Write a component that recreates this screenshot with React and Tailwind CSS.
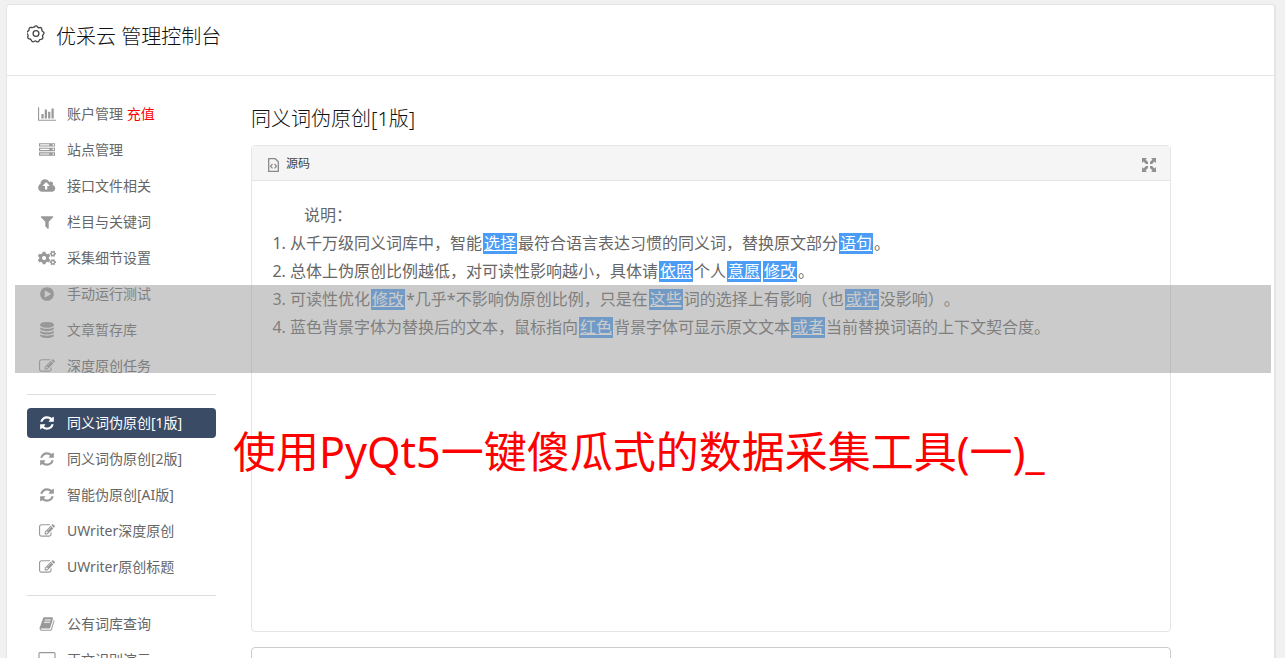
import React from 'react';
import { FaCogs } from 'react-icons/fa';

const ICONS = {
  chart: {
    viewBox: '0 0 2048 1792',
    d: 'M640 896v512h-256v-512h256zm384-512v1024h-256v-1024h256zm1024 1152v128h-2048v-1536h128v1408h1920zm-640-896v768h-256v-768h256zm384-384v1152h-256v-1152h256z',
  },
  server: {
    viewBox: '0 0 1792 1792',
    d: 'M128 1408h1024v-128h-1024v128zm0-512h1024v-128h-1024v128zm1568 448q0-40-28-68t-68-28-68 28-28 68 28 68 68 28 68-28 28-68zm-1568-960h1024v-128h-1024v128zm1568 448q0-40-28-68t-68-28-68 28-28 68 28 68 68 28 68-28 28-68zm0-512q0-40-28-68t-68-28-68 28-28 68 28 68 68 28 68-28 28-68zm96 832v384h-1792v-384h1792zm0-512v384h-1792v-384h1792zm0-512v384h-1792v-384h1792z',
  },
  upload: {
    viewBox: '0 0 1856 1792',
    d: 'M1216 864q0-14-9-23l-352-352q-9-9-23-9t-23 9l-351 351q-10 12-10 24 0 14 9 23t23 9h224v352q0 13 9.5 22.5t22.5 9.5h192q13 0 22.5-9.5t9.5-22.5v-352h224q13 0 22.5-9.5t9.5-22.5zm640 288q0 159-112.5 271.5t-271.5 112.5h-1088q-185 0-316.5-131.5t-131.5-316.5q0-130 70-240t188-165q-2-30-2-43 0-212 150-362t362-150q156 0 285.5 87t188.5 231q71-62 166-62 106 0 181 75t75 181q0 76-41 138 130 31 213.5 135.5t83.5 238.5z',
  },
  filter: {
    viewBox: '0 0 1792 1792',
    d: 'M1595 295q17 41-14 70l-493 493v742q0 42-39 59-13 5-25 5-27 0-45-19l-256-256q-19-19-19-45v-486l-493-493q-31-29-14-70 17-39 59-39h1280q42 0 59 39z',
  },
  play: {
    viewBox: '0 0 1792 1792',
    d: 'M896 128q209 0 385.5 103t279.5 279.5 103 385.5-103 385.5-279.5 279.5-385.5 103-385.5-103-279.5-279.5-103-385.5 103-385.5 279.5-279.5 385.5-103zm384 823q32-18 32-55t-32-55l-544-320q-31-19-64-1-32 19-32 56v640q0 37 32 56 16 8 32 8 17 0 32-9z',
  },
  database: {
    viewBox: '0 0 1792 1792',
    d: 'M896 768q237 0 443-43t325-127v170q0 69-103 128t-280 93.5-385 34.5-385-34.5-280-93.5-103-128v-170q119 84 325 127t443 43zm0 768q237 0 443-43t325-127v170q0 69-103 128t-280 93.5-385 34.5-385-34.5-280-93.5-103-128v-170q119 84 325 127t443 43zm0-384q237 0 443-43t325-127v170q0 69-103 128t-280 93.5-385 34.5-385-34.5-280-93.5-103-128v-170q119 84 325 127t443 43zm0-1152q208 0 385 34.5t280 93.5 103 128v128q0 69-103 128t-280 93.5-385 34.5-385-34.5-280-93.5-103-128v-128q0-69 103-128t280-93.5 385-34.5z',
  },
  edit: {
    viewBox: '0 0 1792 1792',
    d: 'M888 1184l116-116-152-152-116 116v56h96v96h56zm440-720q-16-16-33 1l-350 350q-17 17-1 33t33-1l350-350q17-17 1-33zm80 594v190q0 119-84.5 203.5t-203.5 84.5h-832q-119 0-203.5-84.5t-84.5-203.5v-832q0-119 84.5-203.5t203.5-84.5h832q63 0 117 25 15 7 18 23 3 17-9 29l-49 49q-14 14-32 8-23-6-45-6h-832q-66 0-113 47t-47 113v832q0 66 47 113t113 47h832q66 0 113-47t47-113v-126q0-13 9-22l64-64q15-15 35-7t20 29zm-96-738l288 288-672 672h-288v-288zm444 132l-92 92-288-288 92-92q28-28 68-28t68 28l152 152q28 28 28 68t-28 68z',
  },
  refresh: {
    viewBox: '0 0 1792 1792',
    d: 'M1639 1056q0 5-1 7-64 268-268 434.5t-478 166.5q-146 0-282.5-55t-243.5-157l-129 129q-19 19-45 19t-45-19-19-45v-448q0-26 19-45t45-19h448q26 0 45 19t19 45-19 45l-137 137q71 66 161 102t187 36q134 0 250-65t186-179q11-17 53-117 8-23 30-23h192q13 0 22.5 9.5t9.5 22.5zm25-800v448q0 26-19 45t-45 19h-448q-26 0-45-19t-19-45 19-45l138-138q-148-137-349-137-134 0-250 65t-186 179q-11 17-53 117-8 23-30 23h-199q-13 0-22.5-9.5t-9.5-22.5v-7q65-268 270-434.5t480-166.5q146 0 284 55.5t245 156.5l130-129q19-19 45-19t45 19 19 45z',
  },
  book: {
    viewBox: '0 0 1792 1792',
    d: 'M1703 478q40 57 18 129l-275 906q-19 64-76.5 107.5t-122.5 43.5h-923q-77 0-148.5-53.5t-99.5-131.5q-24-67-2-127 0-4 3-27t4-37q1-8-3-21.5t-3-19.5q2-11 8-21t16.5-23.5 16.5-23.5q23-38 45-91.5t30-91.5q3-10 .5-30t-.5-28q3-11 17-28t17-23q21-36 42-92t25-90q1-9-2.5-32t.5-28q4-13 22-30.5t22-22.5q19-26 42.5-84.5t27.5-96.5q1-8-3-25.5t-2-26.5q2-8 9-18t18-23 17-21q8-12 16.5-30.5t15-35 16-36 19.5-32 26.5-23.5 36-11.5 47.5 5.5l-1 3q38-9 51-9h761q74 0 114 56t18 130l-274 906q-36 119-71.5 153.5t-128.5 34.5h-869q-27 0-38 15-11 16-1 43 24 70 144 70h923q29 0 56-15.5t35-41.5l300-987q7-22 5-57 38 15 59 43zm-1064 2q-4 13 2 22.5t20 9.5h608q13 0 25.5-9.5t16.5-22.5l21-64q4-13-2-22.5t-20-9.5h-608q-13 0-25.5 9.5t-16.5 22.5zm-83 256q-4 13 2 22.5t20 9.5h608q13 0 25.5-9.5t16.5-22.5l21-64q4-13-2-22.5t-20-9.5h-608q-13 0-25.5 9.5t-16.5 22.5z',
  },
  monitor: {
    viewBox: '0 0 1920 1792',
    d: 'M1792 992v-832q0-13-9.5-22.5t-22.5-9.5h-1600q-13 0-22.5 9.5t-9.5 22.5v832q0 13 9.5 22.5t22.5 9.5h1600q13 0 22.5-9.5t9.5-22.5zm128-832v1088q0 66-47 113t-113 47h-544q0 37 16 77.5t32 71 16 43.5q0 26-19 45t-45 19h-512q-26 0-45-19t-19-45q0-14 16-44t32-70 16-78h-544q-66 0-113-47t-47-113v-1088q0-66 47-113t113-47h1600q66 0 113 47t47 113z',
  },
};

const MENU = [
  [
    { icon: 'chart', label: '账户管理', extra: '充值' },
    { icon: 'server', label: '站点管理' },
    { icon: 'upload', label: '接口文件相关' },
    { icon: 'filter', label: '栏目与关键词' },
    { icon: 'cogs', label: '采集细节设置' },
    { icon: 'play', label: '手动运行测试' },
    { icon: 'database', label: '文章暂存库' },
    { icon: 'edit', label: '深度原创任务' },
  ],
  [
    { icon: 'refresh', label: '同义词伪原创[1版]', active: true },
    { icon: 'refresh', label: '同义词伪原创[2版]' },
    { icon: 'refresh', label: '智能伪原创[AI版]' },
    { icon: 'edit', label: 'UWriter深度原创' },
    { icon: 'edit', label: 'UWriter原创标题' },
  ],
  [
    { icon: 'book', label: '公有词库查询' },
    { icon: 'monitor', label: '正文识别演示' },
  ],
];

const Icon = ({ name }) => {
  if (name === 'cogs') {
    return <FaCogs className="h-[18px] w-[18px]" />;
  }
  const { viewBox, d } = ICONS[name];
  return (
    <svg viewBox={viewBox} className="h-4 w-[18px]" fill="currentColor" aria-hidden="true">
      <path d={d} />
    </svg>
  );
};

const MenuItem = ({ icon, label, extra, active }) => (
  <li>
    <a
      href="#"
      className={
        active
          ? 'flex h-[30px] items-center gap-[11px] rounded bg-[#3a4b66] pl-[11px] text-white'
          : 'flex h-[30px] items-center gap-[11px] rounded pl-[11px] text-[#666]'
      }
    >
      <span className={active ? 'text-white' : 'text-[#999]'}>
        <Icon name={icon} />
      </span>
      <span className="pb-0.5">
        {label}
        {extra && <span className="text-[#f00]"> {extra}</span>}
      </span>
    </a>
  </li>
);

const Sidebar = () => (
  <nav className="w-[189px] shrink-0 text-[14px]">
    {MENU.map((group, i) => (
      <ul
        key={i}
        className={
          i > 0
            ? 'mt-[13px] flex flex-col gap-1.5 border-t border-[#ddd] pt-[13px]'
            : 'flex flex-col gap-1.5'
        }
      >
        {group.map((item) => (
          <MenuItem key={item.label} {...item} />
        ))}
      </ul>
    ))}
  </nav>
);

// Replaced word
const Word = ({ children }) => (
  <span className="mx-px inline-block bg-[#4a9cf5] px-px leading-[21px] text-white underline">
    {children}
  </span>
);

const Editor = () => (
  <div className="rounded border border-[#e5e5e5]">
    <div className="flex h-[35px] items-center justify-between border-b border-[#e5e5e5] bg-[#f5f5f5] pr-[14px] pl-4">
      <button type="button" className="flex items-center gap-[7px] text-[12px] text-[#444]">
        <svg viewBox="0 0 11 14" className="mt-1 h-[14px] w-[11px]" fill="none" stroke="#8a8a8a" aria-hidden="true">
          <path strokeWidth="1.3" d="M.7.7h6.600l3 3v9.600H.7z" />
          <path strokeWidth="1.2" d="M4.500 6l-2 2.200 2 2.200M6.500 6l2 2.200-2 2.200" />
        </svg>
        <span className="pt-0.5">源码</span>
      </button>
      <button type="button" aria-label="全屏">
        <svg viewBox="0 0 14 14" className="mt-1 h-[14px] w-[14px]" fill="#909090" aria-hidden="true">
          <path d="M0 0h5L3.500 1.500 6 4v2H4L1.500 3.500 0 5z" />
          <path d="M14 0v5l-1.500-1.500L10 6H8V4l2.500-2.500L9 0z" />
          <path d="M0 14V9l1.500 1.500L4 8h2v2l-2.500 2.500L5 14z" />
          <path d="M14 14H9l1.500-1.500L8 10V8h2l2.500 2.500L14 9z" />
        </svg>
      </button>
    </div>
    <div className="min-h-[450px] p-5 text-[16px] leading-7 text-[#666]">
      <p className="indent-8">说明：</p>
      <ol className="list-decimal pl-[18px]">
        <li>
          从千万级同义词库中，智能<Word>选择</Word>最符合语言表达习惯的同义词，替换原文部分<Word>语句</Word>。
        </li>
        <li>
          总体上伪原创比例越低，对可读性影响越小，具体请<Word>依照</Word>个人<Word>意愿</Word>
          <Word>修改</Word>。
        </li>
        <li>
          可读性优化<Word>修改</Word>*几乎*不影响伪原创比例，只是在<Word>这些</Word>词的选择上有影响（也<Word>或许</Word>没影响）。
        </li>
        <li>
          蓝色背景字体为替换后的文本，鼠标指向<Word>红色</Word>背景字体可显示原文文本<Word>或者</Word>当前替换词语的上下文契合度。
        </li>
      </ol>
    </div>
  </div>
);

export default function App() {
  return (
    <div className="relative h-screen overflow-hidden bg-[#f1f1f1] pt-1 pr-[9px] pl-1.5 font-['Noto_Sans','Noto_Sans_CJK_SC',sans-serif] [text-spacing-trim:space-all]">
      <div className="min-h-full rounded border border-r-2 border-[#e5e5e5] bg-white">
        <header className="flex h-[71px] items-start gap-[11px] border-b border-[#e5e5e5] px-5 pt-4">
          <svg viewBox="0 0 18 18" className="mt-1 h-[18px] w-[18px]" fill="none" stroke="#444" strokeWidth="1.3" aria-hidden="true">
            <path d="M7.300 2.100q1.700-2.400 3.400 0q.6.900 1.600.5q2.900-.5 2.500 2.300q-.1 1 .8 1.500q2.600 1.400.5 3.300q-.8.700-.4 1.700q.8 2.800-2 2.900q-1 0-1.300 1q-1 2.700-3.300.9q-.8-.6-1.700 0q-2.300 1.600-3.200-1.100q-.3-1-1.300-1.100q-2.800-.3-1.900-3q.4-.9-.4-1.600q-2-2 .5-3.300q.9-.4.9-1.400q-.1-2.800 2.700-2.200q1 .3 1.600-.4z" />
            <circle cx="9" cy="8.500" r="2.900" />
          </svg>
          <h1 className="text-[20px] leading-8 font-light text-[#111]">优采云 管理控制台</h1>
        </header>

        <div className="flex gap-[35px] px-5 pt-[23px]">
          <Sidebar />
          <main className="max-w-[920px] flex-1">
            <h2 className="mb-[11px] pt-1 text-[20px] leading-[31px] font-light text-[#111]">同义词伪原创[1版]</h2>
            <Editor />
            <textarea
              aria-label="原文"
              className="mt-[15px] block h-40 w-full resize-none rounded border border-[#ccc] p-3 outline-none"
            />
          </main>
        </div>
      </div>

      <div className="pointer-events-none absolute top-[285px] right-[14px] left-[15px] h-[88px] bg-[#979797]/50" />
      <p className="pointer-events-none absolute top-[422px] left-[233px] text-[43px] leading-[60px] whitespace-nowrap text-[#f00]">
        使用PyQt5一键傻瓜式的数据采集工具(一)_
      </p>
    </div>
  );
}
